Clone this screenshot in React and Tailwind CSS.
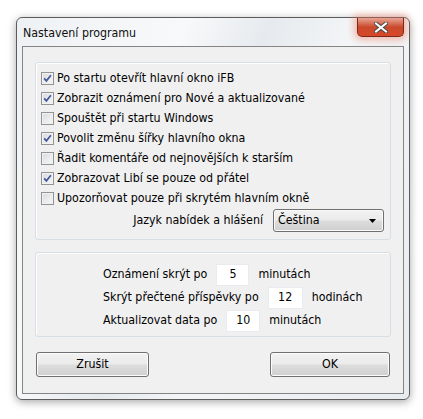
import React from 'react'

const FONT = { fontFamily: "'DejaVu Sans Condensed', 'DejaVu Sans', sans-serif" }

const OPTIONS = [
  { label: 'Po startu otevřít hlavní okno iFB', checked: true },
  { label: 'Zobrazit oznámení pro Nové a aktualizované', checked: true },
  { label: 'Spouštět při startu Windows', checked: false },
  { label: 'Povolit změnu šířky hlavního okna', checked: true },
  { label: 'Řadit komentáře od nejnovějších k starším', checked: false },
  { label: 'Zobrazovat Libí se pouze od přátel', checked: true },
  { label: 'Upozorňovat pouze při skrytém hlavním okně', checked: false },
]

const TIMERS = [
  { label: 'Oznámení skrýt po', value: '5', unit: 'minutách', w: 'w-[33px]' },
  { label: 'Skrýt přečtené příspěvky po', value: '12', unit: 'hodinách', w: 'w-[35px]' },
  { label: 'Aktualizovat data po', value: '10', unit: 'minutách', w: 'w-[34px]' },
]

function Checkbox({ checked }) {
  return (
    <svg width="13" height="13" viewBox="0 0 13 13" className="shrink-0">
      <defs>
        <linearGradient id="cbg" x1="0" y1="0" x2="1" y2="1">
          <stop offset="0" stopColor="#d9dbde" />
          <stop offset="1" stopColor="#f8f8f8" />
        </linearGradient>
      </defs>
      <rect x="0.5" y="0.5" width="12" height="12" fill="#f4f4f4" stroke="#949494" />
      <rect x="2" y="2" width="9" height="9" fill="url(#cbg)" stroke="#e6e6e6" strokeWidth="0.5" />
      {checked && (
        <path d="M3.2 6.4 L5.4 8.9 L9.9 3.2" fill="none" stroke="#43579a" strokeWidth="1.7" />
      )}
    </svg>
  )
}

function CloseButton() {
  return (
    <div className="mr-[5px] h-[19px] w-[47px] rounded-b-[5px] border border-t-0 border-[#7a2a1c] bg-gradient-to-b from-[#e8a595] via-[#c9492b] to-[#d7482a] shadow-[0_0_7px_3px_rgba(240,110,80,0.45)] flex items-center justify-center">
      <svg width="14" height="11" viewBox="0 0 14 11">
        <path d="M2 1.5 L12 9.5 M12 1.5 L2 9.5" stroke="#4a4a4a" strokeWidth="4" strokeLinecap="square" />
        <path d="M2 1.5 L12 9.5 M12 1.5 L2 9.5" stroke="#ffffff" strokeWidth="2" strokeLinecap="square" />
      </svg>
    </div>
  )
}

function Button({ children, w }) {
  return (
    <button className={`${w} h-[25px] rounded-[3px] border border-[#707070] bg-[linear-gradient(#f2f2f2_0%,#ebebeb_48%,#dddddd_52%,#cfcfcf_100%)] shadow-[inset_0_0_0_1px_#fcfcfc] text-[12.3px] text-black`}>
      {children}
    </button>
  )
}

export default function App() {
  return (
    <div className="w-[423px] h-[419px] bg-white pt-[17px] pl-[16px] text-[12.3px] text-black" style={FONT}>
      <div className="w-[394px] h-[383px] rounded-[6px] border border-[#5c5c5c] bg-[linear-gradient(115deg,#eef1f4_0%,#f8f9fa_30%,#e6eaee_45%,#f3f5f7_60%,#e9ecef_100%)] shadow-[0_2px_8px_rgba(0,0,0,0.35)] px-[5px] flex flex-col">
        {/* title bar */}
        <div className="h-[28px] flex items-start justify-between shrink-0">
          <span className="pl-[1px] pt-[8px] text-[12.3px] leading-[14px] text-[#101010]">Nastavení programu</span>
          <div className="-mr-[5px]">
            <CloseButton />
          </div>
        </div>

        {/* client area */}
        <div className="h-[348px] border border-[#858585] bg-[#f0f0f0] px-[12px] pt-[15px] flex flex-col">
          <div className="h-[178px] rounded-[3px] border border-[#d5dfe5] shadow-[inset_1px_1px_0_#ffffff] pt-[5px] pl-[5px] pr-[6px] flex flex-col">
            {OPTIONS.map((o) => (
              <div key={o.label} className="h-[20px] flex items-center gap-[3px]">
                <Checkbox checked={o.checked} />
                <span className="whitespace-nowrap">{o.label}</span>
              </div>
            ))}
            <div className="mt-[1px] h-[23px] flex items-center justify-end gap-[10px]">
              <span>Jazyk nabídek a hlášení</span>
              <div className="w-[111px] h-[23px] rounded-[3px] border border-[#707070] bg-[linear-gradient(#f2f2f2_0%,#ebebeb_48%,#dddddd_52%,#cfcfcf_100%)] shadow-[inset_0_0_0_1px_#fafafa] flex items-center justify-between pl-[4px] pr-[7px]">
                <span>Čeština</span>
                <svg width="7" height="4" viewBox="0 0 7 4">
                  <path d="M0 0 H7 L3.5 4 Z" fill="#000" />
                </svg>
              </div>
            </div>
          </div>

          <div className="mt-[12px] h-[85px] rounded-[3px] border border-[#d5dfe5] shadow-[inset_1px_1px_0_#ffffff] pt-[10px] pl-[67px] flex flex-col">
            {TIMERS.map((t) => (
              <div key={t.label} className="h-[23px] flex items-center gap-[9px]">
                <span className="whitespace-nowrap">{t.label}</span>
                <div className={`${t.w} h-[22px] bg-white border border-[#e8ecf0] flex items-center justify-center`}>
                  {t.value}
                </div>
                <span className="whitespace-nowrap">{t.unit}</span>
              </div>
            ))}
          </div>

          <div className="mt-[15px] flex justify-between pl-[1px] pr-[1px]">
            <Button w="w-[113px]">Zrušit</Button>
            <Button w="w-[120px]">OK</Button>
          </div>
        </div>
      </div>
    </div>
  )
}
